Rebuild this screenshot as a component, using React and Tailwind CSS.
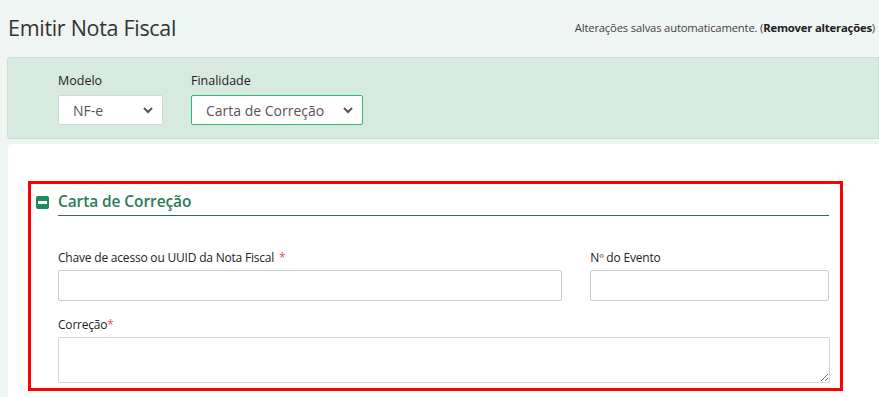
function ChevronDown() {
  return (
    <svg width="12" height="12" viewBox="0 0 12 12" className="text-[#555]">
      <path d="M2 4 L6 8 L10 4" fill="none" stroke="currentColor" strokeWidth="2" />
    </svg>
  )
}

function Select({ value, width, active }) {
  return (
    <div
      className={`flex items-center justify-between h-[30px] bg-white pl-[14px] pr-[8px] text-[14px] text-[#555] rounded-[2px] ${width} ${
        active ? 'border border-[#2fb574]' : 'border border-[#cfd8dc]'
      }`}
    >
      <span>{value}</span>
      <ChevronDown />
    </div>
  )
}

export default function App() {
  return (
    <div className="w-[879px] h-[397px] overflow-hidden bg-[#eff5f3] font-['Open_Sans',sans-serif] text-[#333]">
      <div className="flex items-end justify-between pl-[8px] pr-[4px] h-[50px] pb-[12px]">
        <h1 className="text-[21.5px] leading-none tracking-[-0.3px] text-[#333]">Emitir Nota Fiscal</h1>
        <p className="text-[11.3px] text-[#444] tracking-[-0.2px] pb-[1px]">
          Alterações salvas automaticamente. (<span className="font-bold text-[#222]">Remover alterações</span>)
        </p>
      </div>

      <div className="ml-[7px] mt-[7px] h-[82px] bg-[#d6eae0] border border-[#c9ddd3] rounded-l-[3px] flex gap-[28px] pl-[50px] pt-[14px]">
        <div className="flex flex-col gap-[5px]">
          <span className="text-[12.5px] text-[#222] leading-[18px]">Modelo</span>
          <Select value="NF-e" width="w-[105px]" />
        </div>
        <div className="flex flex-col gap-[5px]">
          <span className="text-[12.5px] text-[#222] leading-[18px]">Finalidade</span>
          <Select value="Carta de Correção" width="w-[172px]" active />
        </div>
      </div>

      <div className="ml-[8px] mt-[5px] h-[260px] bg-white rounded-tl-[4px] pl-[20px] pt-[37px]">
        <div className="w-[815px] h-[210px] border-[3px] border-[#ff0000] pl-[5px] pr-[11px] pt-[8px]">
          <div className="flex items-center gap-[9px] h-[20px]">
            <div className="w-[13px] h-[13px] rounded-[2px] bg-[#1f8a5b] flex items-center justify-center">
              <div className="w-[9px] h-[3px] bg-white" />
            </div>
            <span className="text-[15.5px] font-semibold text-[#2b7d5a] tracking-[-0.1px]">Carta de Correção</span>
          </div>
          <div className="ml-[22px] mt-[3px] h-px bg-[#2b6e4f]" />

          <div className="ml-[22px] mt-[34px] flex gap-[28px]">
            <div className="flex flex-col w-[505px]">
              <span className="text-[12px] text-[#222] leading-[16px] tracking-[-0.2px]">
                Chave de acesso ou UUID da Nota Fiscal <span className="text-[#e05555] ml-[2px]">*</span>
              </span>
              <div className="mt-[4px] h-[31px] border border-[#ccc] rounded-[2px]" />
            </div>
            <div className="flex flex-col w-[239px]">
              <span className="text-[12px] text-[#222] leading-[16px] tracking-[-0.2px]">Nº do Evento</span>
              <div className="mt-[4px] h-[31px] border border-[#ccc] rounded-[2px]" />
            </div>
          </div>

          <div className="ml-[22px] mt-[16px] flex flex-col w-[772px]">
            <span className="text-[12px] text-[#222] leading-[16px] tracking-[-0.2px]">
              Correção<span className="text-[#e05555]">*</span>
            </span>
            <textarea className="mt-[4px] h-[46px] border border-[#cfd8dc] rounded-[2px] resize-y outline-none" />
          </div>
        </div>
      </div>
    </div>
  )
}
